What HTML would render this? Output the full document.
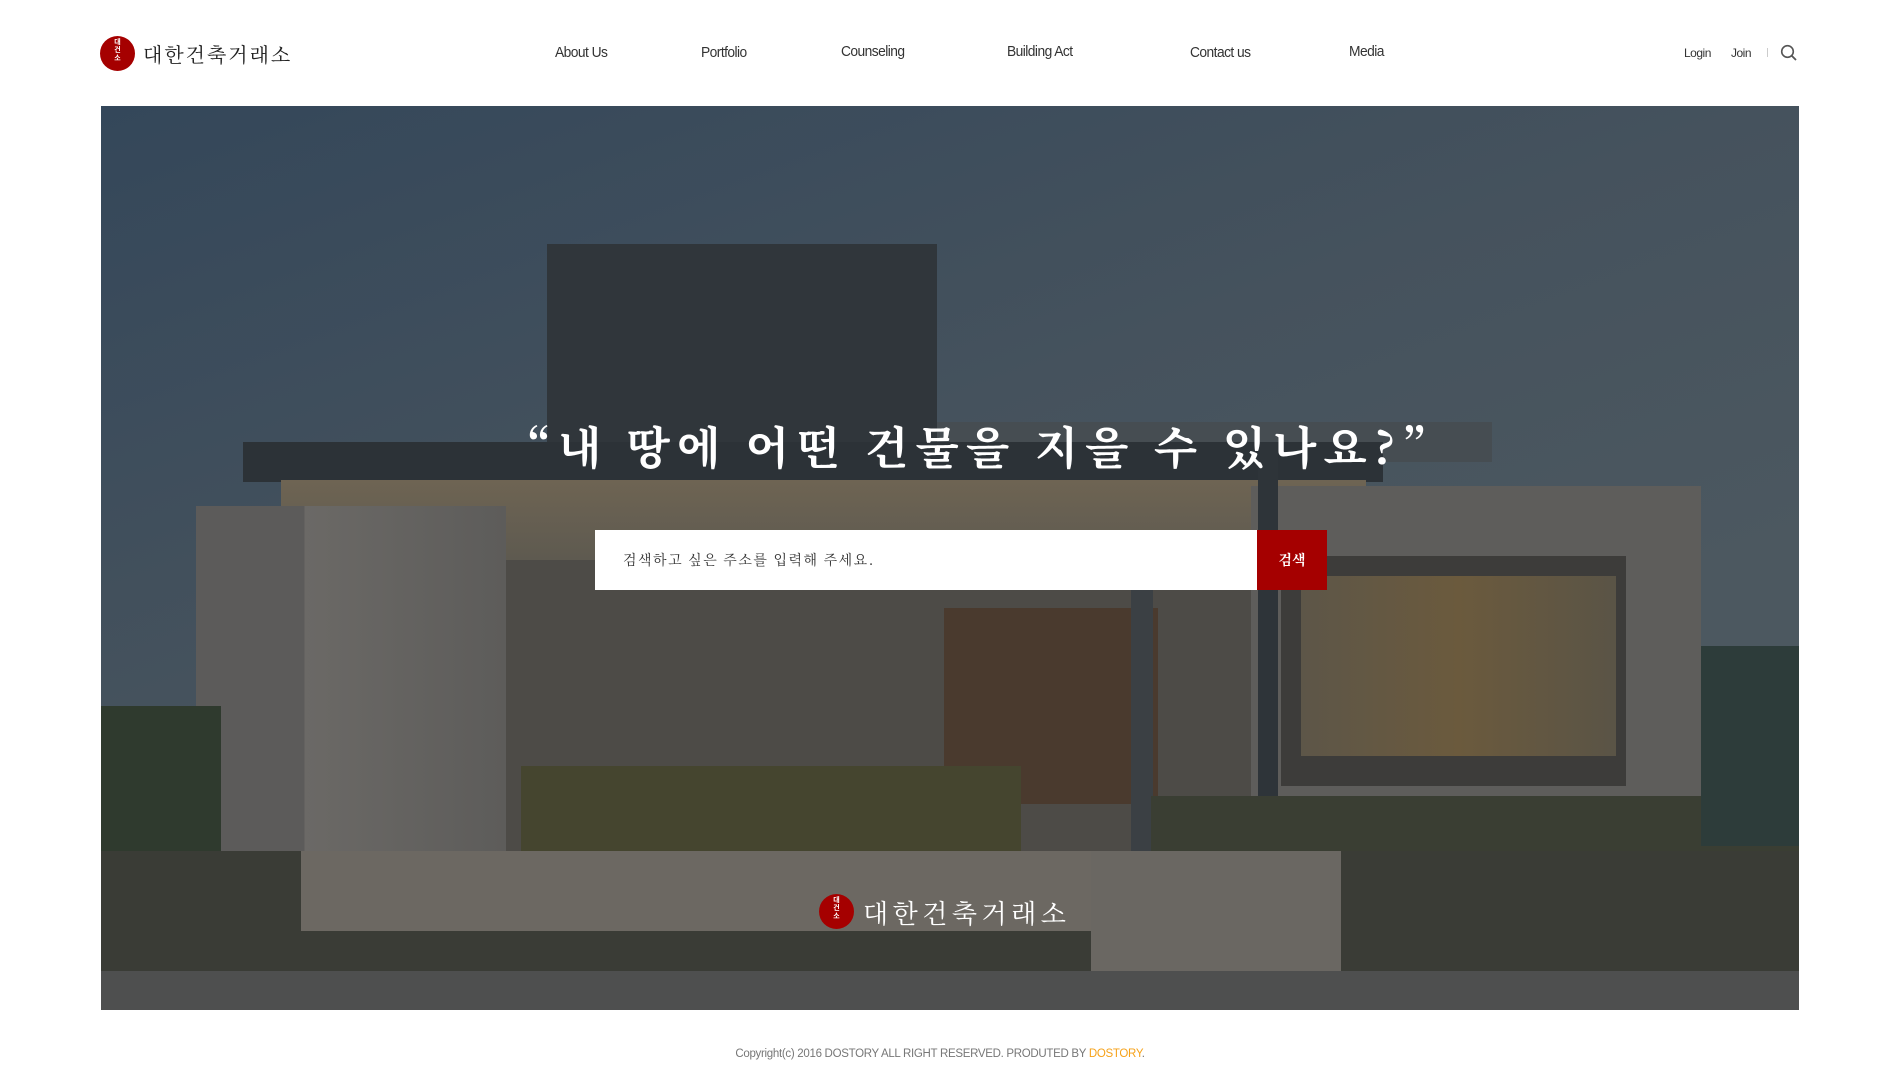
<!DOCTYPE html>
<html><head><meta charset="utf-8"><style>
*{margin:0;padding:0;box-sizing:border-box}
body{width:1900px;height:1087px;background:#fff;position:relative;overflow:hidden;font-family:"Liberation Sans","Noto Sans CJK KR",sans-serif}
.a{position:absolute}
.nav{top:44px;font-size:15px;color:#333;letter-spacing:-0.6px;transform:scaleX(.92);transform-origin:left}
.logo{font-family:"Noto Serif CJK SC","Noto Sans CJK KR",serif;}
.circ{border-radius:50%;background:#a50000;color:#fff;font-size:7px;line-height:8px;text-align:center;font-weight:bold}
#hero{left:101px;top:106px;width:1698px;height:904px;overflow:hidden;background:linear-gradient(160deg,#34475a 0%,#45525d 40%,#4c5860 70%)}
</style></head><body>
<div class="a circ" style="left:100px;top:36px;width:35px;height:35px;padding-top:3px">대<br>건<br>소</div>
<div class="a logo" style="left:143px;top:39px;font-size:20px;color:#222;letter-spacing:2px">대한건축거래소</div>
<div class="a nav" style="left:555px">About Us</div>
<div class="a nav" style="left:701px">Portfolio</div>
<div class="a nav" style="left:841px;top:43px">Counseling</div>
<div class="a nav" style="left:1007px;top:43px">Building Act</div>
<div class="a nav" style="left:1190px">Contact us</div>
<div class="a nav" style="left:1349px;top:43px">Media</div>
<div class="a" style="left:1684px;top:46px;font-size:12px;color:#333;letter-spacing:-0.5px">Login</div>
<div class="a" style="left:1731px;top:46px;font-size:12px;color:#333;letter-spacing:-0.5px">Join</div>
<div class="a" style="left:1767px;top:48px;width:1px;height:9px;background:#ccc"></div>
<svg class="a" style="left:1780px;top:44px" width="18" height="18" viewBox="0 0 18 18"><circle cx="7.5" cy="7.5" r="5.8" fill="none" stroke="#555" stroke-width="1.6"/><line x1="11.6" y1="11.6" x2="16" y2="16" stroke="#555" stroke-width="1.8"/></svg>

<div id="hero" class="a">
 <div class="a" style="left:446px;top:138px;width:390px;height:210px;background:#30363b"></div>
 <div class="a" style="left:836px;top:316px;width:555px;height:40px;background:#464d52"></div>
 <div class="a" style="left:142px;top:336px;width:1140px;height:40px;background:#2c3237"></div>
 <div class="a" style="left:180px;top:374px;width:1085px;height:80px;background:linear-gradient(#6e6453,#5e5a50)"></div>
 <div class="a" style="left:300px;top:454px;width:900px;height:300px;background:#4d4b47"></div>
 <div class="a" style="left:1150px;top:380px;width:450px;height:330px;background:#5e5d5b"></div>
 <div class="a" style="left:1180px;top:450px;width:345px;height:230px;background:#3d3c3a"></div>
 <div class="a" style="left:1200px;top:470px;width:315px;height:180px;background:linear-gradient(90deg,#5d5648,#6b5a3d,#5a5446)"></div>
 <div class="a" style="left:843px;top:502px;width:214px;height:196px;background:#4a3a2e"></div>
 <div class="a" style="left:95px;top:400px;width:310px;height:400px;background:linear-gradient(90deg,#5c5b5a 35%,#6b6966 35%,#5d5c5a)"></div>
 <div class="a" style="left:1157px;top:336px;width:20px;height:420px;background:#2e3439"></div>
 <div class="a" style="left:1030px;top:460px;width:22px;height:290px;background:#3b4044"></div>
 <div class="a" style="left:0;top:600px;width:120px;height:200px;background:#2f3a2e"></div>
 <div class="a" style="left:420px;top:660px;width:500px;height:110px;background:#45452f"></div>
 <div class="a" style="left:1050px;top:690px;width:658px;height:100px;background:#3a3e33"></div>
 <div class="a" style="left:1600px;top:540px;width:108px;height:200px;background:#2d3c3a"></div>
 <div class="a" style="left:0;top:745px;width:1708px;height:122px;background:#3a3c36"></div>
 <div class="a" style="left:200px;top:745px;width:880px;height:80px;background:#6c6862"></div>
 <div class="a" style="left:990px;top:745px;width:250px;height:122px;background:#6a6762"></div>
 <div class="a" style="left:0;top:865px;width:1708px;height:41px;background:#4e4f4f"></div>
 <div class="a logo" style="left:30px;width:1698px;top:306px;text-align:center;font-size:45px;color:#fff;letter-spacing:7px;font-weight:bold">“내 땅에 어떤 건물을 지을 수 있나요?”</div>
 <div class="a" style="left:494px;top:424px;width:662px;height:60px;background:#fff"></div>
 <div class="a logo" style="left:522px;top:444px;font-size:14px;color:#333;letter-spacing:1.5px">검색하고 싶은 주소를 입력해 주세요.</div>
 <div class="a logo" style="left:1156px;top:424px;width:70px;height:60px;background:#a50000;color:#fff;font-size:14px;text-align:center;line-height:60px;font-weight:bold">검색</div>
 <div class="a circ" style="left:718px;top:788px;width:35px;height:35px;padding-top:3px">대<br>건<br>소</div>
 <div class="a logo" style="left:762px;top:788px;font-size:26px;color:#fff;letter-spacing:4.5px">대한건축거래소</div>
</div>
<div class="a" style="left:0;width:1900px;top:1048px;text-align:center;font-size:11.5px;color:#777;letter-spacing:-0.3px;padding-right:20px">Copyright(c) 2016 DOSTORY ALL RIGHT RESERVED. PRODUTED BY <span style="color:#f6a21a">DOSTORY</span>.</div>
</body></html>
